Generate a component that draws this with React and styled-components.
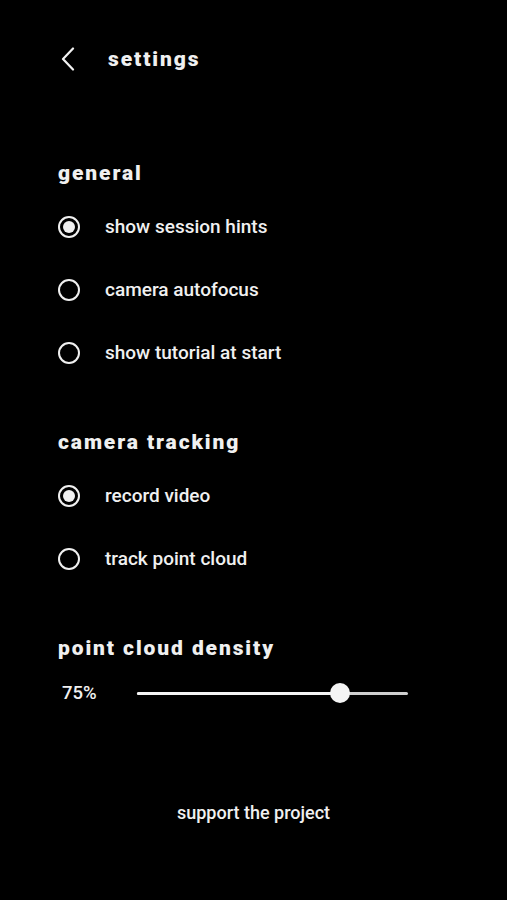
import React, { useState } from 'react'
import styled, { createGlobalStyle } from 'styled-components'

const GlobalStyle = createGlobalStyle`
    body {
        margin: 0;
        background: #000;
        font-family: Roboto, "Liberation Sans", sans-serif;
    }
`

function Radio({ checked }) {
    return (
        <RadioCircle>
            {checked && <RadioDot />}
        </RadioCircle>
    )
}

function App() {
    const [density] = useState(75)
    const general = [
        { label: 'show session hints', on: true },
        { label: 'camera autofocus', on: false },
        { label: 'show tutorial at start', on: false },
    ]
    const tracking = [
        { label: 'record video', on: true },
        { label: 'track point cloud', on: false },
    ]

    return (
        <Page>
            <GlobalStyle />
            <Header>
                <BackButton>
                    <svg width="14" height="24" viewBox="0 0 14 24" fill="none">
                        <path d="M12 1.5 L2 12 L12 22.5" stroke="#f2f2f2" strokeWidth="2.2" strokeLinecap="round" strokeLinejoin="round" />
                    </svg>
                </BackButton>
                <Title>settings</Title>
            </Header>

            <Section first>
                <Heading>general</Heading>
                {general.map((item) => (
                    <Row key={item.label}>
                        <Radio checked={item.on} />
                        <Label>{item.label}</Label>
                    </Row>
                ))}
            </Section>

            <Section>
                <Heading>camera tracking</Heading>
                {tracking.map((item) => (
                    <Row key={item.label}>
                        <Radio checked={item.on} />
                        <Label>{item.label}</Label>
                    </Row>
                ))}
            </Section>

            <Section>
                <Heading>point cloud density</Heading>
                <SliderRow>
                    <Value>{density}%</Value>
                    <Track>
                        <Fill style={{ width: `${density}%` }} />
                        <Thumb style={{ left: `${density}%` }} />
                    </Track>
                </SliderRow>
            </Section>

            <Footer>support the project</Footer>
        </Page>
    )
}

export default App

const Page = styled.div`
    width: 507px;
    height: 900px;
    box-sizing: border-box;
    padding: 39px 58px 0 58px;
    background: #000;
    color: #f0f0f0;
    display: flex;
    flex-direction: column;
`
const Header = styled.div`
    height: 40px;
    display: flex;
    align-items: center;
`
const BackButton = styled.div`
    width: 50px;
    padding-left: 3px;
    box-sizing: border-box;
    display: flex;
    align-items: center;
`
const Title = styled.div`
    font-size: 21px;
    font-weight: 900;
    letter-spacing: 1.9px;
`
const Section = styled.div`
    margin-top: ${(p) => (p.first ? '82px' : '46px')};
    display: flex;
    flex-direction: column;
`
const Heading = styled.div`
    height: 24px;
    line-height: 24px;
    font-size: 21px;
    font-weight: 900;
    letter-spacing: 1.9px;
    margin-bottom: 10px;
`
const Row = styled.div`
    height: 63px;
    display: flex;
    align-items: center;
`
const RadioCircle = styled.div`
    width: 18px;
    height: 18px;
    border: 2px solid #f0f0f0;
    border-radius: 50%;
    display: flex;
    align-items: center;
    justify-content: center;
    margin-right: 25px;
`
const RadioDot = styled.div`
    width: 12px;
    height: 12px;
    border-radius: 50%;
    background: #f0f0f0;
`
const Label = styled.div`
    font-size: 19px;
    font-weight: 500;
`
const SliderRow = styled.div`
    height: 40px;
    margin-top: 3px;
    display: flex;
    align-items: center;
`
const Value = styled.div`
    width: 79px;
    padding-left: 4px;
    box-sizing: border-box;
    font-size: 18.5px;
    font-weight: 500;
`
const Track = styled.div`
    position: relative;
    width: 271px;
    height: 3px;
    border-radius: 2px;
    background: #cfcfcf;
`
const Fill = styled.div`
    height: 100%;
    border-radius: 2px;
    background: #f4f4f4;
`
const Thumb = styled.div`
    position: absolute;
    top: 50%;
    width: 20px;
    height: 20px;
    border-radius: 50%;
    background: #f4f4f4;
    transform: translate(-50%, -50%);
`
const Footer = styled.div`
    margin-top: 89px;
    text-align: center;
    font-size: 18px;
    font-weight: 500;
`
